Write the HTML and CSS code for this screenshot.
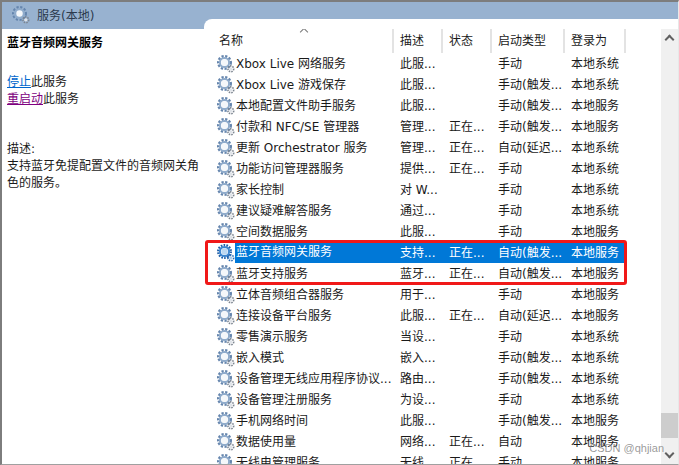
FILE: index.html
```html
<!DOCTYPE html>
<html lang="zh-CN">
<head>
    <meta charset="UTF-8">
    <title>服务(本地)</title>
    <link rel="stylesheet" href="styles.css">
</head>
<body>
    <svg class="defs" width="0" height="0">
        <symbol id="gear" viewBox="0 0 18 18">
            <circle cx="7.5" cy="7.5" r="6.3" fill="none" stroke="#6585ad" stroke-width="2.4" stroke-dasharray="2.2 1.5"/>
            <circle cx="7.5" cy="7.5" r="4.6" fill="none" stroke="#8fabcb" stroke-width="2"/>
            <circle cx="7.5" cy="7.5" r="3.2" fill="#f4f7fa"/>
            <circle cx="13.8" cy="13.8" r="2.9" fill="none" stroke="#7c8590" stroke-width="1.6" stroke-dasharray="1.5 1"/>
            <circle cx="13.8" cy="13.8" r="1.6" fill="#dfe3e8"/>
        </symbol>
        <symbol id="gear-sel" viewBox="0 0 18 18">
            <circle cx="7.5" cy="7.5" r="6.3" fill="none" stroke="#1f5fa8" stroke-width="2.4" stroke-dasharray="1.6 1.2"/>
            <circle cx="7.5" cy="7.5" r="4.6" fill="none" stroke="#3d86d0" stroke-width="2"/>
            <circle cx="7.5" cy="7.5" r="3.2" fill="#bcd8f2"/>
            <circle cx="13.8" cy="13.8" r="2.9" fill="none" stroke="#2a6cb5" stroke-width="1.6" stroke-dasharray="1.5 1"/>
            <circle cx="13.8" cy="13.8" r="1.6" fill="#a9cdec"/>
        </symbol>
    </svg>
    <div class="window">
        <div class="title-bar">
            <svg class="title-icon"><use href="#gear"/></svg>
            <span>服务(本地)</span>
        </div>
        <div class="content">
            <aside class="detail">
                <h2>蓝牙音频网关服务</h2>
                <p class="actions"><a class="stop">停止</a>此服务<br><a class="restart">重启动</a>此服务</p>
                <p class="desc">描述:<br>支持蓝牙免提配置文件的音频网关角色的服务。</p>
            </aside>
            <main class="list">
                <div class="table">
                    <div class="row head">
                        <div class="col name">名称<span class="sort"></span></div>
                        <div class="col">描述</div>
                        <div class="col">状态</div>
                        <div class="col">启动类型</div>
                        <div class="col">登录为</div>
                    </div>
                    <div class="row"><div class="col name"><svg class="icon"><use href="#gear"/></svg>Xbox Live 网络服务</div><div class="col">此服...</div><div class="col"></div><div class="col">手动</div><div class="col">本地系统</div></div>
                    <div class="row"><div class="col name"><svg class="icon"><use href="#gear"/></svg>Xbox Live 游戏保存</div><div class="col">此服...</div><div class="col"></div><div class="col">手动(触发...</div><div class="col">本地系统</div></div>
                    <div class="row"><div class="col name"><svg class="icon"><use href="#gear"/></svg>本地配置文件助手服务</div><div class="col">此服...</div><div class="col"></div><div class="col">手动(触发...</div><div class="col">本地服务</div></div>
                    <div class="row"><div class="col name"><svg class="icon"><use href="#gear"/></svg>付款和 NFC/SE 管理器</div><div class="col">管理...</div><div class="col">正在...</div><div class="col">手动(触发...</div><div class="col">本地服务</div></div>
                    <div class="row"><div class="col name"><svg class="icon"><use href="#gear"/></svg>更新 Orchestrator 服务</div><div class="col">管理...</div><div class="col">正在...</div><div class="col">自动(延迟...</div><div class="col">本地系统</div></div>
                    <div class="row"><div class="col name"><svg class="icon"><use href="#gear"/></svg>功能访问管理器服务</div><div class="col">提供...</div><div class="col">正在...</div><div class="col">手动</div><div class="col">本地系统</div></div>
                    <div class="row"><div class="col name"><svg class="icon"><use href="#gear"/></svg>家长控制</div><div class="col">对 W...</div><div class="col"></div><div class="col">手动</div><div class="col">本地系统</div></div>
                    <div class="row"><div class="col name"><svg class="icon"><use href="#gear"/></svg>建议疑难解答服务</div><div class="col">通过...</div><div class="col"></div><div class="col">手动</div><div class="col">本地系统</div></div>
                    <div class="row"><div class="col name"><svg class="icon"><use href="#gear"/></svg>空间数据服务</div><div class="col">此服...</div><div class="col"></div><div class="col">手动</div><div class="col">本地服务</div></div>
                    <div class="row selected"><div class="col name"><svg class="icon"><use href="#gear-sel"/></svg><span class="sel-name">蓝牙音频网关服务</span></div><div class="col">支持...</div><div class="col">正在...</div><div class="col">自动(触发...</div><div class="col">本地服务</div></div>
                    <div class="row"><div class="col name"><svg class="icon"><use href="#gear"/></svg>蓝牙支持服务</div><div class="col">蓝牙...</div><div class="col">正在...</div><div class="col">自动(触发...</div><div class="col">本地服务</div></div>
                    <div class="row"><div class="col name"><svg class="icon"><use href="#gear"/></svg>立体音频组合器服务</div><div class="col">用于...</div><div class="col"></div><div class="col">手动</div><div class="col">本地服务</div></div>
                    <div class="row"><div class="col name"><svg class="icon"><use href="#gear"/></svg>连接设备平台服务</div><div class="col">此服...</div><div class="col">正在...</div><div class="col">自动(延迟...</div><div class="col">本地服务</div></div>
                    <div class="row"><div class="col name"><svg class="icon"><use href="#gear"/></svg>零售演示服务</div><div class="col">当设...</div><div class="col"></div><div class="col">手动</div><div class="col">本地系统</div></div>
                    <div class="row"><div class="col name"><svg class="icon"><use href="#gear"/></svg>嵌入模式</div><div class="col">嵌入...</div><div class="col"></div><div class="col">手动(触发...</div><div class="col">本地系统</div></div>
                    <div class="row"><div class="col name"><svg class="icon"><use href="#gear"/></svg>设备管理无线应用程序协议...</div><div class="col">路由...</div><div class="col"></div><div class="col">手动(触发...</div><div class="col">本地系统</div></div>
                    <div class="row"><div class="col name"><svg class="icon"><use href="#gear"/></svg>设备管理注册服务</div><div class="col">为设...</div><div class="col"></div><div class="col">手动</div><div class="col">本地系统</div></div>
                    <div class="row"><div class="col name"><svg class="icon"><use href="#gear"/></svg>手机网络时间</div><div class="col">此服...</div><div class="col"></div><div class="col">手动(触发...</div><div class="col">本地服务</div></div>
                    <div class="row"><div class="col name"><svg class="icon"><use href="#gear"/></svg>数据使用量</div><div class="col">网络...</div><div class="col">正在...</div><div class="col">自动</div><div class="col">本地服务</div></div>
                    <div class="row"><div class="col name"><svg class="icon"><use href="#gear"/></svg>无线电管理服务</div><div class="col">无线...</div><div class="col">正在...</div><div class="col">手动</div><div class="col">本地服务</div></div>
                </div>
                <div class="scrollbar">
                    <span class="arrow up"></span>
                    <div class="track"><div class="thumb"></div></div>
                    <span class="arrow down"></span>
                </div>
            </main>
        </div>
        <div class="highlight"></div>
        <div class="watermark">CSDN @qhjian</div>
    </div>
</body>
</html>
```
FILE: styles.css
```css
html, body {
    margin: 0;
    height: 100%;
    overflow: hidden;
}

body {
    font-family: "DejaVu Sans", "Noto Sans CJK SC", sans-serif;
    font-size: 12px;
    color: #1a1a1a;
    background: #fff;
}

.defs {
    position: absolute;
}

.window {
    position: relative;
    height: 100%;
    box-sizing: border-box;
    border-top: 2px solid #7d7d7d;
    border-left: 2px solid #7d7d7d;
    border-right: 1px solid #e8e8e8;
    border-bottom: 1px solid #a0a0a0;
    background: #98b2d0;
    overflow: hidden;
}

.title-bar {
    display: flex;
    align-items: center;
    height: 25px;
    padding-left: 10px;
    gap: 7px;
    color: #2b3a4d;
}

.title-icon {
    width: 18px;
    height: 18px;
}

.content {
    position: absolute;
    top: 17px;
    left: 0;
    right: 0;
    bottom: 0;
    display: flex;
}

.detail {
    width: 202px;
    margin-top: 10px;
    padding: 6px 5px 0;
    box-sizing: border-box;
    background: #fff;
    line-height: 17px;
}

.detail h2 {
    margin: 0;
    font-size: 12px;
    font-weight: 700;
    color: #000;
}

.actions {
    margin: 22px 0 0;
}

.stop {
    color: #0066cc;
    text-decoration: underline;
}

.restart {
    color: #800080;
    text-decoration: underline;
}

.desc {
    margin: 33px 0 0;
}

.list {
    flex: 1;
    display: flex;
    background: #fff;
    border-radius: 8px 0 0 0;
    padding-top: 10px;
    min-width: 0;
}

.table {
    flex: 1;
    min-width: 0;
    overflow: hidden;
}

.row {
    display: grid;
    grid-template-columns: 190px 49px 49px 73px 61px;
    width: 422px;
    height: 21px;
    line-height: 20px;
    align-items: center;
    white-space: nowrap;
}

.row .col {
    padding-left: 6px;
    overflow: hidden;
}

.row .name {
    display: flex;
    align-items: center;
    padding-left: 13px;
}

.icon {
    width: 18px;
    height: 18px;
    flex: none;
    margin-right: 1px;
}

.head {
    position: relative;
    height: 24px;
}

.head .col {
    height: 24px;
    line-height: 24px;
    border-right: 2px solid #e3e3e3;
    box-sizing: border-box;
}

.head .name {
    padding-left: 15px;
}

.sort {
    position: absolute;
    left: 97px;
    top: 0;
    width: 5px;
    height: 5px;
    border-top: 1px solid #777;
    border-left: 1px solid #777;
    transform: rotate(45deg);
}

.selected {
    color: #fff;
    background: #0078d7;
}

.selected .name {
    background: #fff;
}

.selected .icon {
    margin-right: 0;
}

.sel-name {
    display: block;
    flex: 1;
    height: 21px;
    line-height: 21px;
    padding-left: 1px;
    background: #0078d7;
}

.scrollbar {
    width: 17px;
    display: flex;
    flex-direction: column;
    background: #f0f0f0;
    flex: none;
}

.arrow {
    height: 17px;
    position: relative;
    flex: none;
}

.arrow::before {
    content: "";
    position: absolute;
    left: 5px;
    width: 5px;
    height: 5px;
    border-top: 2px solid #606060;
    border-left: 2px solid #606060;
}

.arrow.up::before {
    top: 7px;
    transform: rotate(45deg);
}

.arrow.down::before {
    top: 3px;
    transform: rotate(225deg);
}

.track {
    flex: 1;
    display: flex;
    flex-direction: column;
    justify-content: flex-end;
}

.thumb {
    height: 25px;
    margin-bottom: 9px;
    background: #cdcdcd;
}

.highlight {
    position: absolute;
    left: 203px;
    top: 238px;
    width: 416px;
    height: 39px;
    border: 3px solid #f01818;
    border-radius: 3px;
}

.watermark {
    position: absolute;
    right: 14px;
    bottom: 10px;
    font-family: "Liberation Sans", sans-serif;
    font-size: 11px;
    color: rgba(120, 120, 120, 0.75);
}
```
